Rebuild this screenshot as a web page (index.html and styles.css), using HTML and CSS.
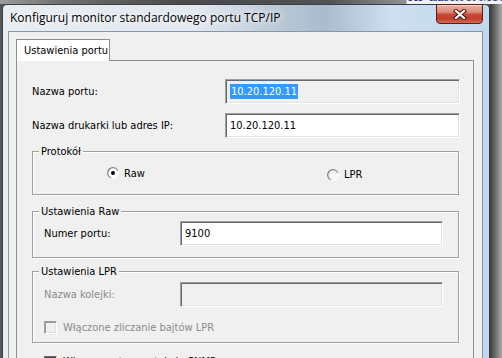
FILE: index.html
```html
<!DOCTYPE html>
<html lang="pl">

<head>
    <meta charset="UTF-8" />
    <title>Konfiguruj monitor standardowego portu TCP/IP</title>
    <link rel="stylesheet" href="styles.css">
</head>

<body>
    <div class="behind-top"><span class="behind-title">HP LaserJet M1005</span></div>
    <div class="stage">
        <div class="window">
            <div class="titlebar">
                <span class="title">Konfiguruj monitor standardowego portu TCP/IP</span>
                <div class="close">
                    <svg width="14" height="11" viewBox="0 0 14 11">
                        <path d="M3 2 L11 9 M11 2 L3 9" stroke="#4a1610" stroke-width="4.2" stroke-linecap="square" fill="none" />
                        <path d="M3 2 L11 9 M11 2 L3 9" stroke="#fff" stroke-width="2.2" stroke-linecap="square" fill="none" />
                    </svg>
                </div>
            </div>
            <div class="client">
                <div class="tabs">
                    <div class="tab">Ustawienia portu</div>
                </div>
                <div class="panel">
                    <div class="field-row">
                        <span>Nazwa portu:</span>
                        <div class="edit edit-disabled"><span class="sel">10.20.120.11</span></div>
                    </div>
                    <div class="field-row">
                        <span>Nazwa drukarki lub adres IP:</span>
                        <div class="edit">10.20.120.11</div>
                    </div>

                    <fieldset class="group group-proto">
                        <legend>Protokół</legend>
                        <div class="radios">
                            <span class="radio">
                                <svg width="12" height="12" viewBox="0 0 12 12">
                                    <defs>
                                        <linearGradient id="rg1" x1="0" y1="0" x2="1" y2="1">
                                            <stop offset="0" stop-color="#6e6e6e" />
                                            <stop offset="0.55" stop-color="#9a9a9a" />
                                            <stop offset="0.7" stop-color="#ffffff" />
                                        </linearGradient>
                                    </defs>
                                    <circle cx="6" cy="6" r="5.3" fill="#fff" stroke="url(#rg1)" stroke-width="1.3" />
                                    <circle cx="6" cy="6" r="2" fill="#000" />
                                </svg>
                                Raw
                            </span>
                            <span class="radio radio-lpr">
                                <svg width="12" height="12" viewBox="0 0 12 12">
                                    <defs>
                                        <linearGradient id="rg2" x1="0" y1="0" x2="1" y2="1">
                                            <stop offset="0" stop-color="#6e6e6e" />
                                            <stop offset="0.55" stop-color="#9a9a9a" />
                                            <stop offset="0.7" stop-color="#ffffff" />
                                        </linearGradient>
                                    </defs>
                                    <circle cx="6" cy="6" r="5.3" fill="#f4f4f4" stroke="url(#rg2)" stroke-width="1.3" />
                                </svg>
                                LPR
                            </span>
                        </div>
                    </fieldset>

                    <fieldset class="group group-raw">
                        <legend>Ustawienia Raw</legend>
                        <div class="group-row">
                            <span>Numer portu:</span>
                            <div class="edit">9100</div>
                        </div>
                    </fieldset>

                    <fieldset class="group group-lpr">
                        <legend>Ustawienia LPR</legend>
                        <div class="group-row">
                            <span class="muted">Nazwa kolejki:</span>
                            <div class="edit edit-disabled"></div>
                        </div>
                        <div class="check check-off">
                            <span class="box"></span>
                            <span class="muted">Włączone zliczanie bajtów LPR</span>
                        </div>
                    </fieldset>

                    <div class="check check-snmp">
                        <span class="box"></span>
                        <span>Włączony stan protokołu SNMP</span>
                    </div>
                </div>
            </div>
        </div>
    </div>
</body>

</html>
```

FILE: styles.css
```css
* {
    box-sizing: border-box;
    margin: 0;
    padding: 0;
}

body {
    width: 502px;
    height: 358px;
    overflow: hidden;
    background: #4f4f4f;
    font: 11px "DejaVu Sans Condensed", "Liberation Sans", sans-serif;
    color: #000;
}

/* what lies behind the dialog */
.behind-top {
    height: 4px;
    overflow: hidden;
    padding-left: 408px;
    background: linear-gradient(to right,
            #9c9c9c 0,
            #707070 60px,
            #4a4a4a 180px,
            #525252 330px,
            #8e8e8e 400px,
            #8e8e8e 406px,
            #f2f2f2 407px,
            #f2f2f2 100%);
}

.behind-title {
    display: block;
    margin-top: -10px;
    font: 14px "Liberation Serif", serif;
    line-height: 14px;
    color: #1d2a6e;
    white-space: nowrap;
}

.stage {
    display: flex;
    height: 354px;
    padding-left: 2px;
    background: linear-gradient(to right,
            #565656 0,
            #565656 490px,
            #3c3c3c 490px,
            #a8a8a8 502px);
}

/* the dialog */
.window {
    flex: none;
    width: 488px;
    display: flex;
    flex-direction: column;
    padding: 0 6px 0 5px;
    border: 1px solid #34404d;
    border-bottom: 0;
    border-radius: 5px 5px 0 0;
    background: linear-gradient(to right,
            #e8edf2 0%,
            #e1e8ef 40%,
            #b7c6d4 58%,
            #a9bccd 66%,
            #cddff0 80%,
            #c2d8ee 100%);
}

.titlebar {
    flex: none;
    height: 26px;
    display: flex;
    align-items: flex-start;
}

.title {
    margin: 5px 0 0 2px;
    font: 12px "Open Sans", "Liberation Sans", sans-serif;
    line-height: 16px;
    color: #000;
    text-shadow: 0 0 6px #fff, 0 0 10px rgba(255, 255, 255, 0.9);
    white-space: nowrap;
}

.close {
    margin: -1px 0 0 auto;
    width: 47px;
    height: 20px;
    display: flex;
    align-items: center;
    justify-content: center;
    border: 1px solid #5e1c13;
    border-radius: 0 0 4px 4px;
    background: linear-gradient(#eab0a3 0%, #dc8a78 40%, #c84a36 52%, #c0402b 75%, #d36a55 100%);
    box-shadow: inset 0 1px 0 rgba(255, 255, 255, 0.5);
}

.client {
    flex: 1;
    background: #f0f0f0;
    border: 1px solid #8797a9;
    border-bottom: 0;
    padding: 7px 8px 0 7px;
}

.tabs {
    display: flex;
}

.tab {
    position: relative;
    z-index: 1;
    width: 94px;
    height: 22px;
    margin-bottom: -1px;
    padding-left: 7px;
    line-height: 21px;
    border: 1px solid #8e8f8f;
    border-bottom: 0;
    background: #fff;
    white-space: nowrap;
}

.panel {
    display: flex;
    flex-direction: column;
    height: 310px;
    padding: 18px 13px 0 15px;
    border: 1px solid #8e8f8f;
    background: #f0f0f0;
}

.field-row {
    display: grid;
    grid-template-columns: 193px 1fr;
    align-items: center;
    height: 25px;
    margin-bottom: 9px;
    white-space: nowrap;
}

.field-row + .field-row {
    margin-bottom: 0;
}

.edit {
    height: 25px;
    padding-left: 4px;
    line-height: 23px;
    border: 1px solid;
    border-color: #a0a0a0 #fff #fff #a0a0a0;
    box-shadow: inset 1px 1px 0 #696969, inset -1px -1px 0 #e3e3e3;
    background: #fff;
}

.edit-disabled {
    background: #f0f0f0;
}

.sel {
    padding: 1px 1px;
    background: #3399ff;
    color: #fff;
}

/* group boxes */
.group {
    margin-right: 1px;
    padding: 0 15px 0 6px;
    border: 1px solid #a0a0a0;
    box-shadow: inset 1px 1px 0 #fff, 1px 1px 0 #fff;
}

.group legend {
    padding: 0 2px;
    line-height: 13px;
    background: #f0f0f0;
}

.group-proto {
    margin-top: 7px;
    padding-top: 7px;
    padding-bottom: 13px;
}

.group-raw {
    margin-top: 10px;
    padding-top: 3px;
    padding-bottom: 11px;
}

.group-lpr {
    margin-top: 7px;
    padding-top: 4px;
    padding-bottom: 7px;
}

.radios {
    display: grid;
    grid-template-columns: 220px auto;
    margin-left: 68px;
    height: 16px;
    align-items: center;
}

.radio {
    display: flex;
    align-items: center;
    gap: 5px;
}

.radio-lpr {
    margin-top: 3px;
}

.group-row {
    display: grid;
    grid-template-columns: 136px 1fr;
    align-items: center;
    margin-left: 5px;
}

.muted {
    color: #8b8b8b;
}

.check {
    display: flex;
    align-items: center;
    gap: 6px;
    height: 16px;
}

.box {
    width: 13px;
    height: 13px;
    flex: none;
    border: 1px solid;
    border-color: #a0a0a0 #fff #fff #a0a0a0;
    box-shadow: inset 1px 1px 0 #9a9a9a, inset -1px -1px 0 #e3e3e3;
    background: #f0f0f0;
}

.check-off {
    margin: 12px 0 0 5px;
}

.check-snmp {
    margin: 12px 0 0 12px;
    align-items: flex-start;
}

.check-snmp .box {
    margin-top: 1px;
    border-color: #6a6a6a #fff #fff #6a6a6a;
    box-shadow: inset 1px 1px 0 #404040, inset -1px -1px 0 #e3e3e3;
    background: #fff;
}
```
